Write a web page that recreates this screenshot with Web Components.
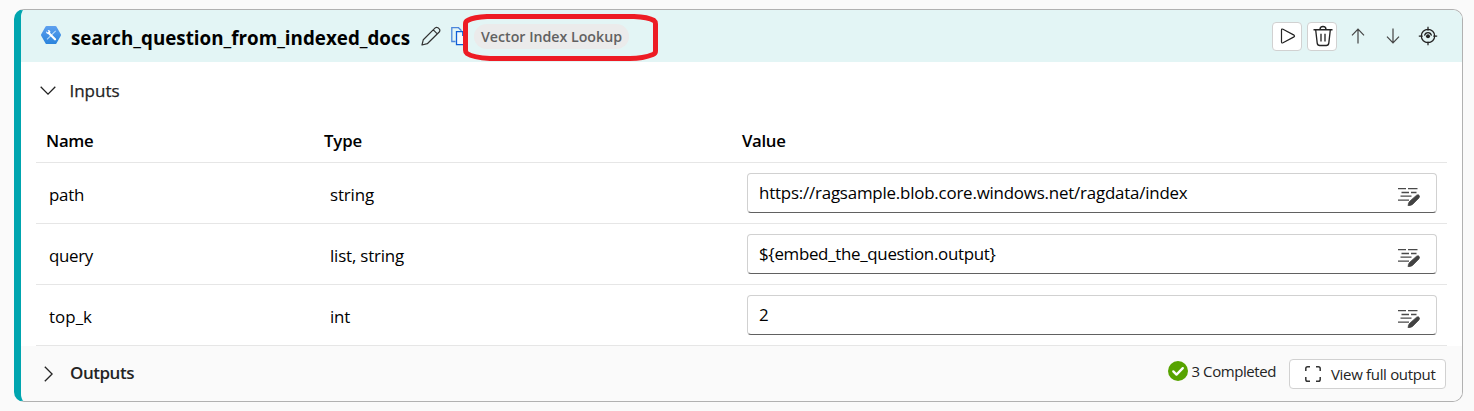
<!DOCTYPE html>
<html lang="en">
<head>
<meta charset="utf-8">
<title>search_question_from_indexed_docs</title>
<style>
html,body{margin:0;height:100%;overflow:hidden;background:#fafafa}
body{font-family:"Open Sans","Noto Sans",sans-serif;color:#000}
</style>
</head>
<body>
<flow-node></flow-node>
<script>
class UiText extends HTMLElement{
  connectedCallback(){
    const r=this.attachShadow({mode:'open'});
    r.innerHTML='<style>:host{display:inline-block;white-space:pre;line-height:24px;flex:none}</style><slot></slot>';
    const w=+this.getAttribute('w'),n=this.textContent.length;
    this.style.letterSpacing=((w-this.getBoundingClientRect().width)/n)+'px';
  }
}
const icons={
hex:['0 0 20 18','<defs><linearGradient id="g" x1="0" y1="0" x2="0" y2="1"><stop offset="0" stop-color="#5ea0ef"/><stop offset="1" stop-color="#2b84dc"/></linearGradient></defs><path fill="url(#g)" d="M5.6 0h8.8q.7 0 1 .6l4.400 7.700q.4.700 0 1.400l-4.400 7.700q-.3.600-1 .600H5.600q-.7 0-1-.6L.200 9.700q-.4-.7 0-1.400L4.600.600q.3-.6 1-.6z"/><path d="M14.700 4.800L6 13.300" stroke="#b9dcf8" stroke-width="1.100"/><path d="M7.700 7l6.300 6.300" stroke="#fff" stroke-width="2.300" stroke-linecap="round"/><path d="M5.200 5.200l1.300 1.300 1.200-1.200L6.500 4q2.400-.5 2.900 1.600.2 2.200-2 2.400Q4.800 7.900 5.200 5.200z" fill="#fff"/>'],
pencil:['0 0 20 20','<path d="M1 19l1.300-5.300L14.200 1.900q1.300-1.100 2.700-.2l1.500 1.500q1 1.400-.2 2.800L6.300 17.700zM12.300 3.800l4 4" fill="none" stroke="#333" stroke-width="1.200" stroke-linejoin="round"/>'],
copy:['0 0 16 19','<g fill="none" stroke-width="1.300"><path d="M4.500 14.500H.8V.7h6.700l3 3" stroke="#4c86dc"/><path d="M5.500 4.700H12l3.400 3.400v9.600H5.500zM11.800 5v3.400h3.500" fill="#f4faff" stroke="#0f5fd7"/></g>'],
play:['0 0 16 16','<path d="M1.500 2v12q.1 1.400 1.500.8l11-5.900q1.100-.9 0-1.800L3 1.200Q1.600.600 1.500 2z" fill="none" stroke="#242424" stroke-width="1.200"/>'],
trash:['0 0 20 22','<path d="M.5 4.700h19M7 4.500Q7 1.500 10 1.500t3 3M2.700 5l1.500 13.200q.3 2.300 2.500 2.300h6.600q2.200 0 2.500-2.300L17.300 5M8 8.700v7.800M12 8.700v7.800" fill="none" stroke="#242424" stroke-width="1.350"/>'],
up:['0 0 14 16','<path d="M7 15.500V1.200M1 7.300l6-6.200 6 6.200" fill="none" stroke="#444" stroke-width="1.200"/>'],
down:['0 0 14 16','<path d="M7 .500v14.300M1 8.700l6 6.200 6-6.200" fill="none" stroke="#444" stroke-width="1.200"/>'],
target:['0 0 20 20','<g fill="none" stroke="#242424" stroke-width="1.250"><circle cx="10" cy="10" r="6.700"/><path d="M10 .800v4M10 15.500v3.800M.800 10h4M15.200 10h4"/><path d="M6.500 9.600Q7.200 6.600 10 6.600t3.500 3"/></g><circle cx="10" cy="10.200" r="2" fill="#242424"/>'],
chevd:['0 0 16 9','<path d="M.7.800L8 8.100 15.300.800" fill="none" stroke="#242424" stroke-width="1.300"/>'],
chevr:['0 0 9 16','<path d="M.8.700L8.100 8 .8 15.300" fill="none" stroke="#242424" stroke-width="1.300"/>'],
edit:['0 0 22 19','<path d="M0 1.700h8M10 1.700h9.500M3.500 5.500h7.500M13 5.500h5.500M2.500 9.200h11M0 13.200h11" fill="none" stroke="#4a4a4a" stroke-width="1.300"/><path d="M18.600 8.200q2-1.100 2.700.500.500 1.300-.6 2.500l-6 6.100q-1.600 1.300-4.600 1.500.1-2.900 1.400-4.300z" fill="#424242" stroke="#424242" stroke-width=".8"/>'],
check:['0 0 20 20','<circle cx="10" cy="10" r="10" fill="#57a300"/><path d="M5.300 10.400l3.200 3.200 6.300-6.500" fill="none" stroke="#fff" stroke-width="2.300" stroke-linecap="round" stroke-linejoin="round"/>'],
full:['0 0 16 16','<path d="M.8 5V2.600Q.8.800 2.600.800H5M11 .800h2.400q1.800 0 1.800 1.800V5M15.200 11v2.400q0 1.800-1.800 1.800H11M5 15.200H2.600q-1.800 0-1.800-1.800V11" fill="none" stroke="#333" stroke-width="1.500"/>']
};
class UiIcon extends HTMLElement{
  connectedCallback(){
    const [vb,body]=icons[this.getAttribute('name')],[,,w,h]=vb.split(' ');
    this.attachShadow({mode:'open'}).innerHTML=`<style>:host{display:block;flex:none;width:${w}px;height:${h}px}svg{display:block}</style><svg width="${w}" height="${h}" viewBox="${vb}">${body}</svg>`;
  }
}
class NodeButton extends HTMLElement{
  connectedCallback(){
    this.attachShadow({mode:'open'}).innerHTML='<style>:host{box-sizing:border-box;display:flex;align-items:center;justify-content:center;flex:none;width:30px;height:29px;border-radius:4px;border:1px solid transparent;padding-left:1px}:host([outlined]){background:#fff;border-color:#d1d1d1}</style><slot></slot>';
  }
}
class TypeBadge extends HTMLElement{
  connectedCallback(){
    this.attachShadow({mode:'open'}).innerHTML=`<style>
    :host{display:block;position:relative;flex:none}
    .pill{display:flex;align-items:center;box-sizing:border-box;width:155px;height:25px;border-radius:13px;background:#ebebeb;padding:1px 0 0 7px;color:#616161;font-size:14.2px;font-weight:600}
    svg{position:absolute;left:-11px;top:-10px}</style>
    <div class="pill"><slot></slot></div>
    <svg width="196" height="48" viewBox="0 0 196 48"><path d="M24 2.500H171Q185 3 191 6.500Q192.500 7.500 192.500 10V37Q192.500 39.500 190 40.500Q180 44.500 167 44.500H27Q10 43.500 4 39.500Q2.500 38.500 2.500 36V10Q2.500 7.500 4.500 6.500Q11 3 24 2.500z" fill="none" stroke="#ed1c24" stroke-width="5"/></svg>`;
  }
}
class InputRow extends HTMLElement{
  connectedCallback(){
    this.attachShadow({mode:'open'}).innerHTML=`<style>
    :host{display:grid;grid-template-columns:281px 417px 690px;box-sizing:border-box;height:61px;border-bottom:1px solid #e6e6e6;padding-left:13px;font-size:16.900px;align-items:center}
    .name,.type{padding-top:4px;display:flex}
    .field{box-sizing:border-box;height:40px;border:1px solid #d1d1d1;border-bottom-color:#616161;border-radius:4px;display:flex;align-items:center;justify-content:space-between;padding:0 16px 0 11px;background:#fff}
    ui-icon{margin-top:7px}</style>
    <div class="name"><slot name="name"></slot></div><div class="type"><slot name="type"></slot></div>
    <div class="field"><slot name="value"></slot><ui-icon name="edit"></ui-icon></div>`;
  }
}
class FlowNode extends HTMLElement{
  connectedCallback(){
    this.attachShadow({mode:'open'}).innerHTML=`<style>
    :host{display:block;padding:9px 11px 0 14px}
    .card{box-sizing:border-box;height:393px;border:1px solid #b1b1b1;border-left:7px solid #00a5af;border-radius:10px;background:#fff;overflow:hidden}
    header{height:52px;background:#e3f5f5;display:flex;align-items:center}
    header>ui-icon:first-child{margin:-3px 10px 0 20px}
    .title{font-size:18.800px;font-weight:700;margin-top:3px}
    .pen{margin:0 0 0 11px}.copy{margin-left:10px}
    type-badge{margin-left:7px}
    .actions{display:flex;gap:5px;margin-left:auto;padding-right:20px}
    .section{height:57px;display:flex;align-items:center;padding-left:19px;font-size:17px;font-weight:500;color:#242424}
    .section ui-text{margin-left:13.500px;-webkit-text-stroke:.25px #242424}
    .table{padding:0 15px}
    .head{display:grid;grid-template-columns:278px 418px 1fr;box-sizing:border-box;height:44px;border-bottom:1px solid #e6e6e6;padding-left:10px;font-size:16.800px;font-weight:600;align-items:center;justify-items:start}
    footer{height:55px;background:#fafafa;display:flex;align-items:center;padding:0 16px 0 23px;color:#242424;font-size:15px}
    footer .out{font-size:17px;font-weight:600;margin-left:17px;margin-top:-2px}
    .status{display:flex;align-items:center;margin:-5px 13px 0 auto;gap:4px}
    .view{box-sizing:border-box;width:157px;height:30px;border:1px solid #d1d1d1;border-radius:4px;background:#fff;display:flex;align-items:center;padding-left:15px;gap:10px;margin-top:1px}
    </style>
    <div class="card">
    <header><ui-icon name="hex"></ui-icon><ui-text class="title" w="339">search_question_from_indexed_docs</ui-text>
    <ui-icon class="pen" name="pencil"></ui-icon><ui-icon class="copy" name="copy"></ui-icon>
    <type-badge><ui-text w="141">Vector Index Lookup</ui-text></type-badge>
    <div class="actions"><node-button outlined><ui-icon name="play"></ui-icon></node-button><node-button outlined><ui-icon name="trash"></ui-icon></node-button><node-button><ui-icon name="up"></ui-icon></node-button><node-button><ui-icon name="down"></ui-icon></node-button><node-button><ui-icon name="target"></ui-icon></node-button></div></header>
    <div class="section"><ui-icon name="chevd"></ui-icon><ui-text w="50">Inputs</ui-text></div>
    <div class="table">
    <div class="head"><ui-text w="47.500">Name</ui-text><ui-text w="38">Type</ui-text><ui-text w="43.500">Value</ui-text></div>
    <input-row><ui-text slot="name" w="35">path</ui-text><ui-text slot="type" w="44">string</ui-text><ui-text slot="value" w="428.500">https://ragsample.blob.core.windows.net/ragdata/index</ui-text></input-row>
    <input-row><ui-text slot="name" w="44">query</ui-text><ui-text slot="type" w="74">list, string</ui-text><ui-text slot="value" w="236.500">\${embed_the_question.output}</ui-text></input-row>
    <input-row><ui-text slot="name" w="43">top_k</ui-text><ui-text slot="type" w="20">int</ui-text><ui-text slot="value" w="10">2</ui-text></input-row>
    </div>
    <footer><ui-icon name="chevr"></ui-icon><ui-text class="out" w="64">Outputs</ui-text>
    <div class="status"><ui-icon name="check"></ui-icon><ui-text w="84.500">3 Completed</ui-text></div>
    <div class="view"><ui-icon name="full"></ui-icon><ui-text w="104.500">View full output</ui-text></div></footer>
    </div>`;
  }
}
customElements.define('ui-icon',UiIcon);
customElements.define('node-button',NodeButton);
customElements.define('type-badge',TypeBadge);
customElements.define('input-row',InputRow);
customElements.define('flow-node',FlowNode);
customElements.define('ui-text',UiText);
</script>
</body>
</html>
